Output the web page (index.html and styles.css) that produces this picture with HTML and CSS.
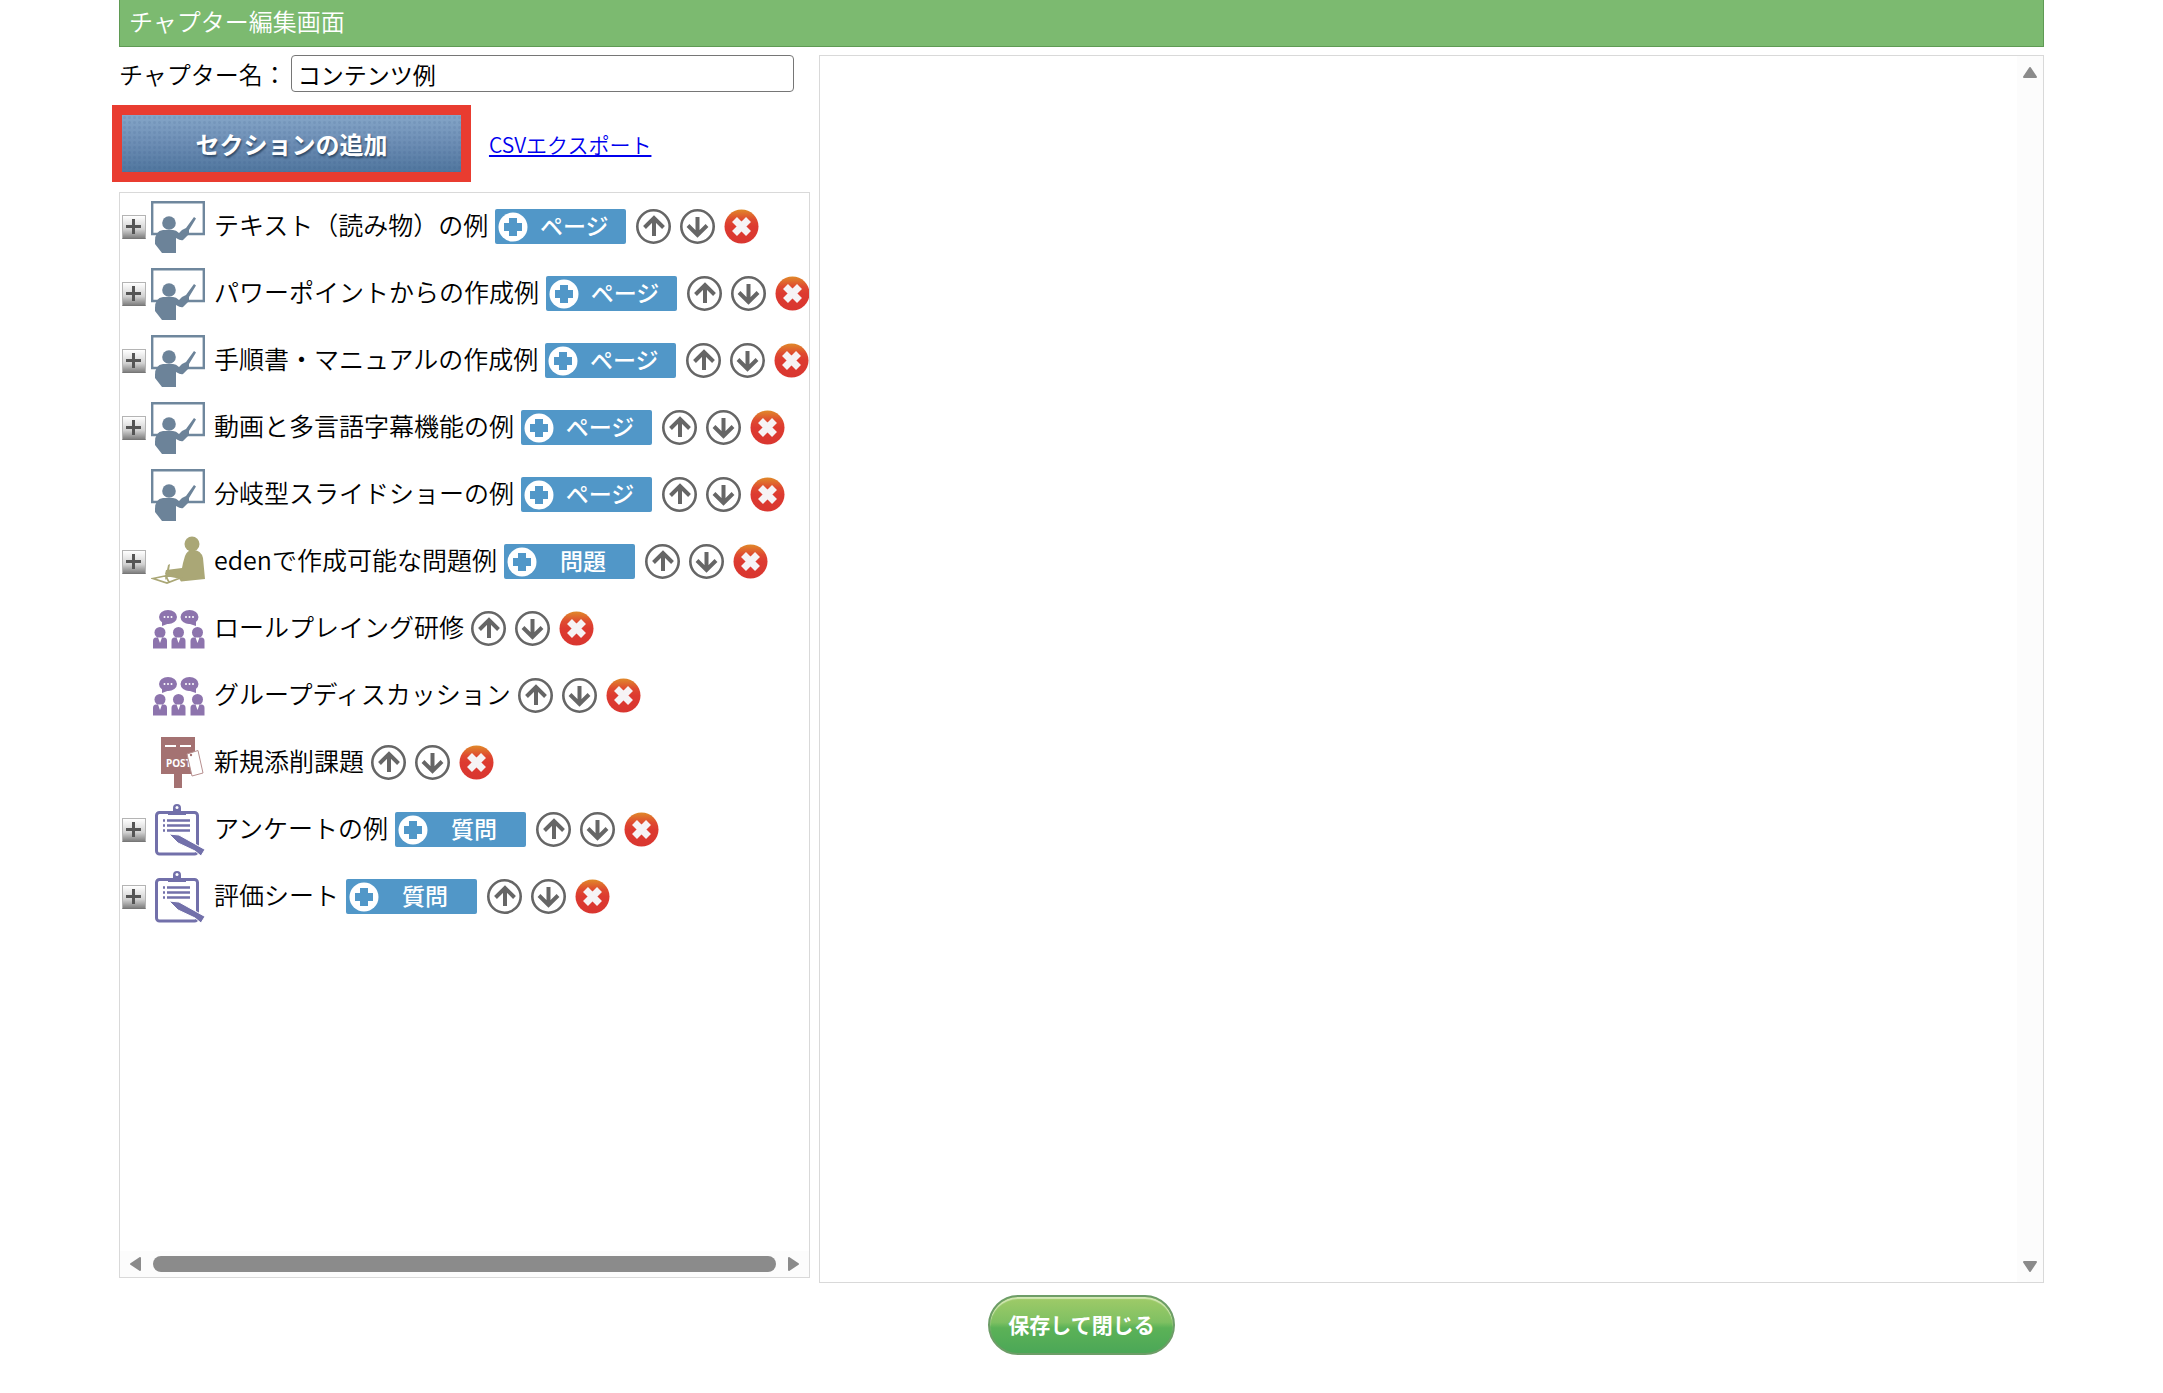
FILE: index.html
```html
<!DOCTYPE html>
<html lang="ja">
<head>
<meta charset="utf-8">
<title>チャプター編集画面</title>
<link rel="stylesheet" href="styles.css">
</head>
<body>
<svg class="defs" aria-hidden="true">
  <defs>
    <linearGradient id="red" x1="0" y1="0" x2="0" y2="1">
      <stop offset="0" stop-color="#e0892a"/><stop offset=".3" stop-color="#df4a30"/><stop offset=".5" stop-color="#dd3a30"/><stop offset="1" stop-color="#d93630"/>
    </linearGradient>
    <symbol id="lesson" viewBox="0 0 54 54">
      <path d="M13 34H1.200V2.200H52.800V34H35" fill="none" stroke="#6f879d" stroke-width="2.400"/>
      <circle cx="18" cy="23" r="6.800" fill="#6c8399"/>
      <path d="M4 41Q4 31 12 30H22Q25 30 28 33L31 30 35 28 43 17 45 18.500 38 30 38 34 32 40Q30 41 25 38V53H11L4 44Z" fill="#6c8399"/>
    </symbol>
    <symbol id="exam" viewBox="0 0 54 54">
      <circle cx="41" cy="9" r="7.500" fill="#aaa776"/>
      <path d="M32 28L34 21Q36 15 42 15 50 15 52 23L54 44 30 46.500 27 42 17 42 14 39 15 35 31 33Z" fill="#aaa776"/>
      <path d="M17 30L19 29 17 42 14 45Z" fill="#aaa776"/>
      <path d="M2 43.500L16 40.500 29 43 16 48ZM14 40L18 47" fill="none" stroke="#aaa776" stroke-width="1.700"/>
    </symbol>
    <symbol id="person" viewBox="0 0 16 22">
      <circle cx="8" cy="5.500" r="5.500"/>
      <path d="M1 21.500V14Q1 10.500 4 10.500H12Q15 10.500 15 14V21.500Z"/>
      <path d="M6 10.500H10L8 16Z" fill="#fff"/>
    </symbol>
    <symbol id="group" viewBox="0 0 54 54">
      <g fill="#8d74ad">
        <ellipse cx="17" cy="15" rx="9" ry="7"/><path d="M11 19L11 24 19 21Z"/>
        <ellipse cx="38.500" cy="15" rx="9" ry="7"/><path d="M45 19L45 24 36 21Z"/>
        <use href="#person" x="1" y="25" width="16" height="22"/>
        <use href="#person" x="19.500" y="25" width="16" height="22"/>
        <use href="#person" x="38.500" y="25" width="16" height="22"/>
      </g>
      <g fill="#fff"><circle cx="13.500" cy="15" r="1"/><circle cx="17" cy="15" r="1"/><circle cx="20.500" cy="15" r="1"/><circle cx="35" cy="15" r="1"/><circle cx="38.500" cy="15" r="1"/><circle cx="42" cy="15" r="1"/></g>
    </symbol>
    <symbol id="post" viewBox="0 0 54 54">
      <path d="M10 1H44V38H31V52H23V38H10Z" fill="#a47272"/>
      <path d="M14 10H25M29 10H40" stroke="#fff" stroke-width="2"/>
      <text x="15" y="31" class="post-text">POST</text>
      <path d="M36 18L47 14.500 52 37 41 40Z" fill="#fff" stroke="#b78f8f" stroke-width="1"/>
      <circle cx="40" cy="19" r="1.200" fill="#a47272"/>
    </symbol>
    <symbol id="survey" viewBox="0 0 54 54">
      <rect x="5.500" y="9.500" width="41" height="41.500" rx="3" fill="#fff" stroke="#7270aa" stroke-width="3"/>
      <path d="M17 12V8H22V5Q22 1 26 1T30 5V8H35V12Z" fill="#7270aa"/><circle cx="26" cy="4.500" r="1.500" fill="#fff"/>
      <path d="M12 17.500H14M16 17.500H39M12 22.500H14M16 22.500H39M12 27.500H14M16 27.500H39" stroke="#7270aa" stroke-width="2.500"/>
      <path d="M18 31L28 32 54 46.500 50 53 44 48 27 40Z" fill="#7270aa" stroke="#fff" stroke-width="1"/>
    </symbol>
    <symbol id="up" viewBox="0 0 35 35">
      <circle cx="17.500" cy="17.500" r="16.200" fill="#fff" stroke="#666" stroke-width="2.600"/>
      <path d="M18 27V9M8.500 18.500L18 9 27.500 18.500" fill="none" stroke="#666" stroke-width="4"/>
    </symbol>
    <symbol id="down" viewBox="0 0 35 35">
      <circle cx="17.500" cy="17.500" r="16.200" fill="#fff" stroke="#666" stroke-width="2.600"/>
      <path d="M17.500 8V26M8 16.500L17.500 26 27 16.500" fill="none" stroke="#666" stroke-width="4"/>
    </symbol>
    <symbol id="delete" viewBox="0 0 35 35">
      <circle cx="17.500" cy="17.500" r="17" fill="url(#red)"/>
      <path d="M10.500 10.500L24.500 24.500M24.500 10.500L10.500 24.500" stroke="#f6f3f5" stroke-width="7"/>
    </symbol>
    <symbol id="add" viewBox="0 0 30 30">
      <circle cx="15" cy="15" r="14.500" fill="#fff"/><path d="M15 6V24M6 15H24" stroke="#5197c8" stroke-width="8"/>
    </symbol>
  </defs>
</svg>
<div class="page">
  <header class="title-bar"><h1>チャプター編集画面</h1></header>
  <main class="editor">
    <section class="side">
      <div class="name-row">
        <label for="chapter">チャプター名：</label>
        <input id="chapter" type="text" value="コンテンツ例">
      </div>
      <div class="actions">
        <button type="button" class="add-section">セクションの追加</button>
        <a href="#">CSVエクスポート</a>
      </div>
      <div class="tree">
        <ul class="sections" id="sections">
          <li><button type="button" class="toggle" aria-label="展開"></button><svg class="kind"><use href="#lesson"/></svg><span class="name">テキスト（読み物）の例</span><button type="button" class="add"><svg><use href="#add"/></svg><span>ページ</span></button></li>
          <li><button type="button" class="toggle" aria-label="展開"></button><svg class="kind"><use href="#lesson"/></svg><span class="name">パワーポイントからの作成例</span><button type="button" class="add"><svg><use href="#add"/></svg><span>ページ</span></button></li>
          <li><button type="button" class="toggle" aria-label="展開"></button><svg class="kind"><use href="#lesson"/></svg><span class="name">手順書・マニュアルの作成例</span><button type="button" class="add"><svg><use href="#add"/></svg><span>ページ</span></button></li>
          <li><button type="button" class="toggle" aria-label="展開"></button><svg class="kind"><use href="#lesson"/></svg><span class="name">動画と多言語字幕機能の例</span><button type="button" class="add"><svg><use href="#add"/></svg><span>ページ</span></button></li>
          <li class="leaf"><svg class="kind"><use href="#lesson"/></svg><span class="name">分岐型スライドショーの例</span><button type="button" class="add"><svg><use href="#add"/></svg><span>ページ</span></button></li>
          <li><button type="button" class="toggle" aria-label="展開"></button><svg class="kind"><use href="#exam"/></svg><span class="name">edenで作成可能な問題例</span><button type="button" class="add"><svg><use href="#add"/></svg><span>問題</span></button></li>
          <li class="leaf"><svg class="kind"><use href="#group"/></svg><span class="name">ロールプレイング研修</span></li>
          <li class="leaf"><svg class="kind"><use href="#group"/></svg><span class="name">グループディスカッション</span></li>
          <li class="leaf"><svg class="kind"><use href="#post"/></svg><span class="name">新規添削課題</span></li>
          <li><button type="button" class="toggle" aria-label="展開"></button><svg class="kind"><use href="#survey"/></svg><span class="name">アンケートの例</span><button type="button" class="add"><svg><use href="#add"/></svg><span>質問</span></button></li>
          <li><button type="button" class="toggle" aria-label="展開"></button><svg class="kind"><use href="#survey"/></svg><span class="name">評価シート</span><button type="button" class="add"><svg><use href="#add"/></svg><span>質問</span></button></li>
        </ul>
        <div class="scroll-x" aria-hidden="true">
          <svg viewBox="0 0 11 14" width="11" height="14"><path d="M10 1V13L1 7Z"/></svg>
          <div class="thumb"></div>
          <svg viewBox="0 0 11 14" width="11" height="14"><path d="M1 1V13L10 7Z"/></svg>
        </div>
      </div>
    </section>
    <section class="preview">
      <div class="scroll-y" aria-hidden="true">
        <svg viewBox="0 0 14 11" width="14" height="11"><path d="M1 10H13L7 1Z"/></svg>
        <svg viewBox="0 0 14 11" width="14" height="11"><path d="M1 1H13L7 10Z"/></svg>
      </div>
    </section>
  </main>
  <footer><button type="button" class="save">保存して閉じる</button></footer>
</div>
<script src="app.js"></script>
</body>
</html>
```
FILE: styles.css
```css
* { box-sizing: border-box; }
body {
  margin: 0;
  background: #fff;
  color: #000;
  font: 350 24px/32px "Noto Sans CJK JP", sans-serif;
}
button, input { font-family: inherit; }
button { padding: 0; border: 0; background: none; cursor: pointer; }
svg { display: block; flex: none; }
.defs { position: absolute; width: 0; height: 0; }
.page { margin: 0 5.5%; }
.title-bar {
  height: 47px;
  padding: 5px 9px;
  background: #7cba70;
  border: 1px solid #5f9a54;
  border-top: 0;
}
h1 { margin: 0; font: inherit; color: #fff; }
.editor {
  display: grid;
  grid-template-columns: 691fr 1225fr;
  gap: 9px;
  height: calc(100vh - 165px);
  min-height: 920px;
  margin-top: 8px;
}
.side { display: flex; flex-direction: column; min-width: 0; padding-bottom: 5px; }
.name-row { display: flex; align-items: center; gap: 4px; padding-right: 16px; white-space: nowrap; }
.name-row input {
  flex: 1;
  min-width: 0;
  height: 37px;
  padding: 2px 6px;
  border: 1px solid #767676;
  border-radius: 4px;
  font-size: 23px;
  color: #000;
}
.actions { display: flex; align-items: center; gap: 18px; margin: 13px 0 10px -7px; font-size: 21px; }
.actions a { color: #00e; }
.add-section {
  width: 359px;
  height: 77px;
  border: 10px solid #e93c30;
  background:
    radial-gradient(circle, rgba(40, 70, 120, .1) 1px, transparent 2px) 0 0 / 5px 5px,
    linear-gradient(#85a6c8, #6c8db4 50%, #50769e);
  color: #fff;
  font-size: 24px;
  font-weight: 700;
  text-shadow: 1px 2px 2px #2f4a68;
}
.tree {
  flex: 1;
  display: flex;
  flex-direction: column;
  min-height: 0;
  border: 1px solid #d9d9d9;
}
.sections { flex: 1; margin: 0; padding: 0 0 0 2px; list-style: none; overflow: hidden; white-space: nowrap; }
.sections li { display: flex; align-items: center; height: 67px; }
.sections .leaf { padding-left: 29px; }
.toggle {
  width: 24px;
  height: 24px;
  margin-right: 5px;
  border: 1px solid #b4b4b4;
  border-bottom-color: #777;
  background:
    linear-gradient(#555, #555) center / 15px 3px no-repeat,
    linear-gradient(#555, #555) center / 3px 15px no-repeat,
    linear-gradient(#fff, #d2d2d2 60%, #808080);
}
.kind { width: 54px; height: 54px; margin-right: 9px; }
.post-text { font: 700 10px "Noto Sans", sans-serif; fill: #fff; }
.name { padding-bottom: 6px; margin-right: 7px; font-size: 25px; }
.toggle, .add, .icon { flex: none; }
.add {
  display: flex;
  align-items: center;
  width: 131px;
  height: 35px;
  margin-right: 10px;
  padding: 0 6px 0 3px;
  border-radius: 2px;
  background: #5197c8;
  color: #fff;
  font-size: 23px;
  font-weight: 500;
}
.add svg { width: 30px; height: 30px; }
.add span { flex: 1; padding-bottom: 3px; }
.icon { margin-right: 9px; }
.icon svg { width: 35px; height: 35px; }
.icon:last-child { margin-right: 0; }
.scroll-x, .scroll-y { display: flex; align-items: center; background: #fcfcfc; fill: #8b8b8b; }
.scroll-x svg, .scroll-y svg { stroke: #8b8b8b; stroke-width: 2; stroke-linejoin: round; }
.scroll-x { height: 26px; padding: 0 10px; gap: 12px; }
.thumb { flex: 1; height: 16px; border-radius: 8px; background: #8b8b8b; }
.preview { display: flex; justify-content: flex-end; border: 1px solid #d9d9d9; }
.scroll-y { flex-direction: column; justify-content: space-between; width: 26px; padding: 11px 0 10px; }
footer { display: flex; justify-content: center; padding: 12px 0; }
.save {
  width: 187px;
  height: 60px;
  padding-bottom: 2px;
  border: 2px solid #6d9d67;
  border-radius: 30px;
  background: linear-gradient(#a0cb68, #7fc062 45%, #5cb257 55%, #4ba757);
  box-shadow: inset 0 2px 1px #d2e7b4;
  color: #fff;
  font-size: 21px;
  font-weight: 700;
}
```
FILE: app.js
```js
// Every section ends with the same three controls.
const controls = [["up", "上へ"], ["down", "下へ"], ["delete", "削除"]];
document.querySelectorAll("#sections li").forEach((row) => {
  row.insertAdjacentHTML("beforeend", controls.map(([id, label]) =>
    `<button type="button" class="icon" aria-label="${label}"><svg><use href="#${id}"/></svg></button>`).join(""));
});
```
